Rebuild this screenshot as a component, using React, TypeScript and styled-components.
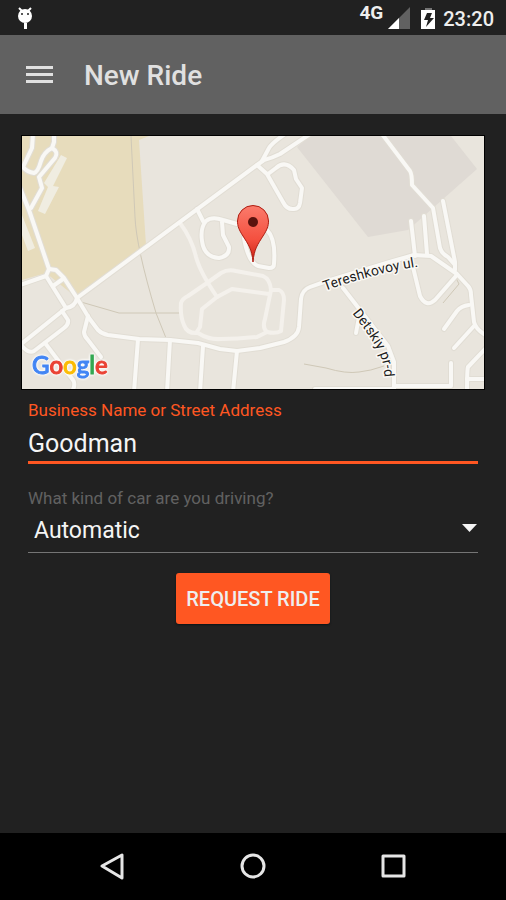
import React, { useState } from "react";
import styled, { createGlobalStyle } from "styled-components";

const GlobalStyle = createGlobalStyle`
  * { box-sizing: border-box; }
  body {
    margin: 0;
    background: #212121;
    font-family: Roboto, "Liberation Sans", sans-serif;
  }
`;

const Screen = styled.div`
  display: flex;
  flex-direction: column;
  min-height: 100vh;
  background: #212121;
  color: #eeeeee;
`;

const StatusBar = styled.div`
  display: flex;
  align-items: center;
  justify-content: space-between;
  height: 35px;
  padding: 0 12px 0 16px;
`;

const StatusGroup = styled.div`
  display: flex;
  align-items: center;
`;

const Network = styled.span`
  align-self: flex-start;
  margin-right: 5px;
  font-size: 19px;
  line-height: 16px;
  font-weight: 700;
`;

const Clock = styled.time`
  margin-left: 1px;
  font-size: 20px;
  line-height: 24px;
  font-weight: 500;
  padding-top: 2px;
`;

const AppBar = styled.header`
  display: flex;
  align-items: center;
  gap: 24px;
  height: 79px;
  padding: 0 18px;
  background: #616161;
`;

const IconButton = styled.button`
  display: grid;
  place-items: center;
  width: 42px;
  height: 42px;
  padding: 0;
  border: 0;
  background: none;
  color: inherit;
  cursor: pointer;
`;

const Title = styled.h1`
  margin: 0;
  padding-top: 3px;
  font-size: 28px;
  line-height: 32px;
  font-weight: 500;
  color: #e0e0e0;
`;

const Content = styled.main`
  flex: 1;
  padding: 22px 22px 24px;
`;

const MapCard = styled.div`
  outline: 1px solid #000000;
  background: #e9e5dd;
`;

const MapSvg = styled.svg`
  display: block;
  width: 100%;
  height: auto;
`;

const Form = styled.form`
  display: flex;
  flex-direction: column;
  padding: 0 6px;
`;

const Label = styled.label<{ $active?: boolean }>`
  margin-top: ${(p) => (p.$active ? 10 : 23)}px;
  font-size: 17px;
  line-height: 22px;
  color: ${(p) => (p.$active ? "#ff5722" : "#616161")};
`;

const TextInput = styled.input`
  width: 100%;
  height: 43px;
  padding: 4px 0 0;
  border: 0;
  border-bottom: 3px solid #ff5722;
  border-radius: 0;
  outline: none;
  background: none;
  color: #f5f5f5;
  font: 400 25px/32px Roboto, "Liberation Sans", sans-serif;
`;

const SelectBox = styled.div`
  display: grid;
  align-items: center;
  height: 44px;
  border-bottom: 1px solid #757575;
  > * { grid-area: 1 / 1; }
`;

const Select = styled.select`
  appearance: none;
  width: 100%;
  height: 42px;
  padding: 0 24px 0 6px;
  border: 0;
  outline: none;
  background: transparent;
  color: #f5f5f5;
  font: 400 23px/30px Roboto, "Liberation Sans", sans-serif;
  option { background: #424242; }
`;

const Caret = styled.svg`
  justify-self: end;
  margin: 0 1px 4px 0;
  pointer-events: none;
`;

const SubmitButton = styled.button`
  align-self: center;
  height: 51px;
  margin-top: 20px;
  padding: 0 10px;
  border: 0;
  border-radius: 3px;
  background: #ff5722;
  box-shadow: 0 1px 2px #0a1418;
  color: #eeeeee;
  font: 500 20px/24px Roboto, "Liberation Sans", sans-serif;
  cursor: pointer;
`;

const NavBar = styled.nav`
  display: flex;
  align-items: center;
  justify-content: center;
  gap: 98px;
  height: 67px;
  background: #000000;
`;

const MAJOR_ROADS = [
  "M310 134L280 154Q272 158 264 160L257 165L77 298",
  "M285 134Q272 143 269 148L262 161",
  "M257 165L267 174L283 202Q287 210 294 209Q299 209 300 203L302 188L296 179L294 170Q285 160 276 168L268 174",
  "M197 209L203 221",
  "M237 224L223 220Q212 216 206 221Q200 228 202 241Q204 257 219 258Q230 256 229 247L223 235L222 222",
  "M267 230Q276 239 274 264Q274 268 269 268L258 266Q248 262 244 238",
  "M20 188L29 210L49 269L56 270L64 278L77 298L89 318L98 330Q102 334 108 335L139 339L170 340L198 343L220 349L237 351L260 348L284 342Q298 337 299 327L301 299Q302 290 310 287L327 281L393 261L414 255L431 256L457 274L468 286Q471 289 471 295L474 322Q476 330 487 336",
  "M20 285L46 276L49 269",
  "M46 276L66 308Q75 307 77 298",
  "M53 286L63 279",
  "M66 308L20 345",
  "M62 311L68 320Q69 324 64 328L34 351Q29 354 22 346",
  "M45 343L73 380Q76 384 72 392",
  "M88 316L84 332Q84 336 88 340L101 357",
  "M33 134L32 148L23 167Q27 172 34 173Q38 172 41 161Q44 152 52 148L54 142V134",
  "M52 148Q59 152 55 158L39 177L42 188L31 208",
  "M138 339L134 392",
  "M170 340L167 392",
  "M203 346L200 392",
  "M237 351L233 392",
  "M382 134L410 171Q412 174 412 185L433 208L440 248Q442 254 448 257L455 265",
  "M411 221L415 256",
  "M424 216L427 254",
  "M443 201L455 262V270",
  "M413 267L420 296Q426 308 435 300L456 276",
  "M444 329L457 311Q461 306 469 305",
  "M454 348L474 326",
  "M486 348L468 367Q467 370 467 392",
  "M467 379H486",
  "M343 288L388 346L394 362V392",
  "M359 317L356 333",
  "M451 363V386H394",
  "M315 389H394",
];

const MINOR_ROADS = [
  "M180 223Q192 239 196 257Q200 272 217 297",
  "M207 283L221 273Q228 269 236 271L263 276Q270 279 271 290L265 319Q262 328 267 332L257 337Q237 339 221 339Q209 340 198 333Q187 334 184 325Q180 316 181 303Q182 299 188 296Z",
  "M269 294L232 289L217 297L202 309L200 327L196 333",
  "M271 290H279Q284 292 284 300L281 331Q276 334 267 332",
];

const PATHS = [
  "M131 136L135 217Q136 246 156 313L166 338",
  "M81 302L119 313H180",
  "M304 364L326 368Q346 374 359 372Q370 371 384 366",
  "M443 303L459 284L456 278",
];

const LOGO = [
  { ch: "G", color: "#4285f4" },
  { ch: "o", color: "#ea4335" },
  { ch: "o", color: "#fbbc05" },
  { ch: "g", color: "#4285f4" },
  { ch: "l", color: "#34a853" },
  { ch: "e", color: "#ea4335" },
];

const MapText = styled.text`
  font-family: Roboto, sans-serif;
  font-size: 14px;
  fill: #1c1c1c;
  stroke: #faf8f4;
  stroke-width: 3px;
  stroke-linejoin: round;
  paint-order: stroke;
`;

const LogoLetter = styled.tspan<{ $color: string }>`
  fill: ${(p) => p.$color};
  stroke: ${(p) => p.$color};
`;

const LogoText = styled.text`
  font-family: Lato, sans-serif;
  font-size: 24px;
  font-weight: 500;
  stroke-width: 1px;
  filter: drop-shadow(0 0 1px #ffffff) drop-shadow(0 0 1px #ffffff);
`;

function RideMap() {
  return (
    <MapCard>
      <MapSvg viewBox="22 136 462 253" role="img" aria-label="Map of the pickup location">
        <defs>
          <linearGradient id="pin" x1="0" y1="0" x2="0" y2="1">
            <stop offset="0" stopColor="#fb7b6c" />
            <stop offset="0.6" stopColor="#f4503f" />
            <stop offset="1" stopColor="#c81f12" />
          </linearGradient>
          <path id="tereshkovoy" d="M325 291Q376 272 430 265" />
          <path id="detskiy" d="M352 313Q374 341 380 355Q384 363 385 384" />
        </defs>
        <path fill="#e9e5dd" d="M22 136h462v253H22z" />
        <path fill="#e7dcbc" d="M22 136H149L139 140L146 245L77 298L46 273L22 280Z" />
        <path fill="#dfdad4" d="M310 136H451L477 169L408 230L368 237L297 147Z" />
        <path fill="#f0ede1" d="M61 155L67 158L53 186L59 187L45 214L38 211L48 187L44 183ZM22 215L35 248L28 251L22 235Z" />
        <g fill="none" stroke="#cfc8b7" strokeWidth="1">
          {PATHS.map((d) => <path key={d} d={d} />)}
        </g>
        <g fill="none" strokeLinecap="round" strokeLinejoin="round">
          <g stroke="#e1ddd4" strokeWidth="6">
            {MAJOR_ROADS.map((d) => <path key={d} d={d} />)}
          </g>
          <g stroke="#f4f1ec" strokeWidth="4">
            {MINOR_ROADS.map((d) => <path key={d} d={d} />)}
          </g>
          <g stroke="#f9f8f5" strokeWidth="4">
            {MAJOR_ROADS.map((d) => <path key={d} d={d} />)}
          </g>
        </g>
        <MapText><textPath href="#tereshkovoy">Tereshkovoy ul.</textPath></MapText>
        <MapText><textPath href="#detskiy">Detskiy pr-d</textPath></MapText>
        <path
          fill="url(#pin)"
          stroke="#ae1c10"
          strokeWidth="1"
          d="M253 262C252 249 248 244 243 236C239 230 237.500 226 237.500 221A15.500 15.500 0 0 1 268.500 221C268.500 226 267 230 263 236C258 244 254 249 253 262Z"
        />
        <circle cx="253" cy="222" r="5" fill="#5a120d" />
        <LogoText x="32" y="374">
          {LOGO.map((l, i) => <LogoLetter key={i} $color={l.color}>{l.ch}</LogoLetter>)}
        </LogoText>
      </MapSvg>
    </MapCard>
  );
}

function DebugIcon() {
  return (
    <svg width="18" height="24" viewBox="0 0 18 24" fill="#ffffff" aria-hidden="true">
      <path d="M3 2L6 5M15 2L12 5" stroke="#ffffff" strokeWidth="2" />
      <ellipse cx="9" cy="10" rx="7" ry="7" />
      <path d="M8 17h3v6H8z" />
      <circle cx="6" cy="8" r="1" fill="#212121" />
      <circle cx="12" cy="8" r="1" fill="#212121" />
    </svg>
  );
}

export default function App() {
  const [address, setAddress] = useState("Goodman");
  return (
    <>
      <GlobalStyle />
      <Screen>
        <StatusBar>
          <DebugIcon />
          <StatusGroup>
            <Network>4G</Network>
            <svg width="22" height="22" viewBox="0 0 22 22" aria-hidden="true">
              <path fill="#616161" d="M22 0V22H0Z" />
              <path fill="#ffffff" d="M11 11V22H0Z" />
            </svg>
            <svg width="32" height="22" viewBox="0 0 32 22" aria-hidden="true">
              <path fill="#757575" d="M15 1h7v3h-7z" />
              <path fill="#ffffff" d="M11 3h14v19H11z" />
              <path fill="#212121" d="M17 6h5l-2 5h4l-8 9 2-7h-4z" />
            </svg>
            <Clock>23:20</Clock>
          </StatusGroup>
        </StatusBar>
        <AppBar>
          <IconButton type="button" aria-label="Open menu">
            <svg width="28" height="20" viewBox="0 0 28 20" fill="#e0e0e0" aria-hidden="true">
              <path d="M1 1h27v3H1zM1 8h27v3H1zM1 15h27v3H1z" />
            </svg>
          </IconButton>
          <Title>New Ride</Title>
        </AppBar>
        <Content>
          <RideMap />
          <Form onSubmit={(e) => e.preventDefault()}>
            <Label $active htmlFor="address">Business Name or Street Address</Label>
            <TextInput id="address" value={address} onChange={(e) => setAddress(e.target.value)} />
            <Label htmlFor="car">What kind of car are you driving?</Label>
            <SelectBox>
              <Select id="car" defaultValue="Automatic">
                <option>Automatic</option>
                <option>Manual</option>
              </Select>
              <Caret width="15" height="9" viewBox="0 0 15 9" aria-hidden="true">
                <path fill="#f5f5f5" d="M0 0h15L7.500 8z" />
              </Caret>
            </SelectBox>
            <SubmitButton type="submit">REQUEST RIDE</SubmitButton>
          </Form>
        </Content>
        <NavBar aria-label="System">
          <IconButton type="button" aria-label="Back">
            <svg width="28" height="28" viewBox="0 0 28 28" fill="none" stroke="#e6e6e6" strokeWidth="3" strokeLinejoin="round">
              <path d="M3 13L23 2V25Z" />
            </svg>
          </IconButton>
          <IconButton type="button" aria-label="Home">
            <svg width="28" height="28" viewBox="0 0 28 28" fill="none" stroke="#e6e6e6" strokeWidth="3">
              <circle cx="14" cy="13" r="11" />
            </svg>
          </IconButton>
          <IconButton type="button" aria-label="Recent apps">
            <svg width="28" height="28" viewBox="0 0 28 28" fill="none" stroke="#e6e6e6" strokeWidth="3" strokeLinejoin="round">
              <path d="M4 3h21v20H4z" />
            </svg>
          </IconButton>
        </NavBar>
      </Screen>
    </>
  );
}
